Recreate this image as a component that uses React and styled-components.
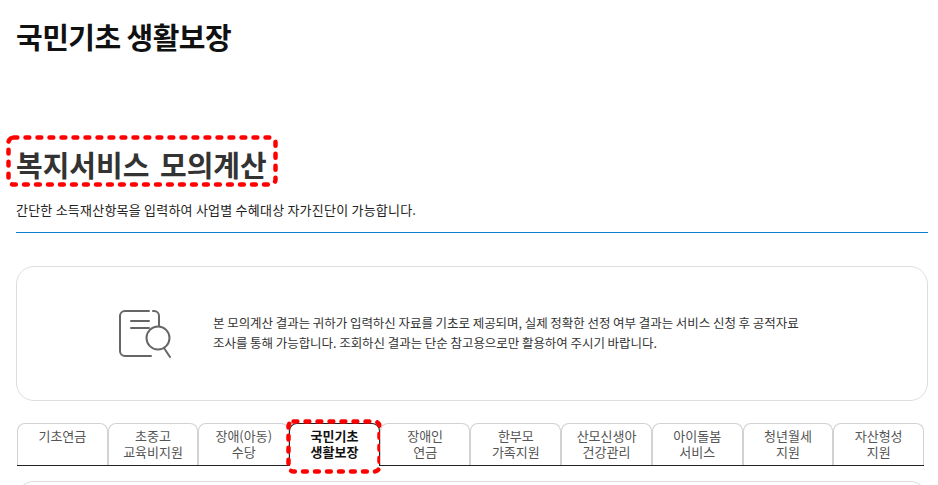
import React from "react";
import styled, { createGlobalStyle } from "styled-components";

const Global = createGlobalStyle`
  html, body { margin: 0; padding: 0; background: #fff; overflow: hidden; }
  body { font-family: "Noto Sans CJK KR", "Noto Sans", sans-serif; }
`;
const Page = styled.div`
  width: 938px; height: 485px; overflow: hidden; box-sizing: border-box; padding: 0 10px 0 16px;
`;
const PageTitle = styled.h1`
  margin: 0; padding-top: 15px; height: 121px; box-sizing: border-box;
  font-size: 29px; line-height: 42px; font-weight: 700; color: #111; letter-spacing: -0.55px;
`;
const SectionHead = styled.div`
  height: 111px; border-bottom: 1px solid #0a7fd0;
`;
const SectionTitle = styled.h2`
  position: relative; width: fit-content; margin: 0; padding-top: 23px;
  font-size: 29px; line-height: 40px; font-weight: 700; color: #333; word-spacing: 4px;
`;
const SectionDesc = styled.p`
  margin: 17px 0 0; font-size: 13px; line-height: 18px; color: #222; letter-spacing: 0.22px;
`;
const Notice = styled.div`
  margin-top: 33px; height: 135px; box-sizing: border-box; border: 1px solid #ddd; border-radius: 18px;
  display: flex; align-items: center; padding-left: 101px; gap: 41px;
`;
const NoticeText = styled.p`
  margin: -2px 0 0; width: 610px; font-size: 12.5px; line-height: 20px; color: #333; letter-spacing: -0.05px;
`;
const Tabs = styled.div`
  margin: 22px 4px 0 1px; display: grid; grid-template-columns: repeat(10, 1fr); height: 42px; border-bottom: 1px solid #222;
`;
const Tab = styled.div`
  position: relative; box-sizing: border-box; height: ${p => (p.$active ? "43px" : "42px")};
  border: 1px solid ${p => (p.$active ? "#222" : "#d2d2d2")}; border-bottom: none; border-radius: 8px 8px 0 0;
  background: #fff; padding-top: 4px; text-align: center; font-size: 13px; line-height: 16px;
  color: ${p => (p.$active ? "#111" : "#555")}; font-weight: ${p => (p.$active ? 700 : 400)};
`;
const Panel = styled.div`
  margin-top: 15px; height: 40px; border: 1px solid #ddd; border-radius: 18px;
`;
const Frame = styled.svg`
  position: absolute; left: ${p => p.$left}px; top: ${p => p.$top}px; pointer-events: none; overflow: visible;
`;
const DashFrame = ({ left, top, width, height }) => (
  <Frame $left={left} $top={top} width={width} height={height} viewBox={`0 0 ${width} ${height}`} fill="none">
    <rect x="2.5" y="2.5" width={width - 5} height={height - 5} rx="5" stroke="#f00" strokeWidth="4.5" strokeLinecap="round" strokeDasharray="3.8 8.2" />
  </Frame>
);
const tabs = [["기초연금"],["초중고","교육비지원"],["장애(아동)","수당"],["국민기초","생활보장"],["장애인","연금"],["한부모","가족지원"],["산모신생아","건강관리"],["아이돌봄","서비스"],["청년월세","지원"],["자산형성","지원"]];
const Icon = () => (
  <svg width="54" height="50" viewBox="0 0 54 50" fill="none" stroke="#666" strokeWidth="2" strokeLinecap="round" strokeLinejoin="round">
    <path d="M31 2H7a5 5 0 0 0-5 5v35a5 5 0 0 0 5 5h26" />
    <path d="M35 2h1a5 5 0 0 1 5 5v10" />
    <path d="M13 12h18M13 19h18" />
    <circle cx="40" cy="29" r="11.5" />
    <path d="M46 39l6 9" />
  </svg>
);
export default function App() {
  return (
    <Page>
      <Global />
      <PageTitle>국민기초 생활보장</PageTitle>
      <SectionHead>
        <SectionTitle>
          복지서비스 모의계산
          <DashFrame left={-10} top={14} width={272} height={52} />
        </SectionTitle>
        <SectionDesc>간단한 소득재산항목을 입력하여 사업별 수혜대상 자가진단이 가능합니다.</SectionDesc>
      </SectionHead>
      <Notice>
        <Icon />
        <NoticeText>본 모의계산 결과는 귀하가 입력하신 자료를 기초로 제공되며, 실제 정확한 선정 여부 결과는 서비스 신청 후 공적자료<br />조사를 통해 가능합니다. 조회하신 결과는 단순 참고용으로만 활용하여 주시기 바랍니다.</NoticeText>
      </Notice>
      <Tabs>
        {tabs.map((t) => {
          const active = t[0] === "국민기초";
          return (
            <Tab key={t[0]} $active={active}>
              {t[0]}{t[1] && <br />}{t[1]}
              {active && <DashFrame left={-4} top={-5} width={96} height={55} />}
            </Tab>
          );
        })}
      </Tabs>
      <Panel />
    </Page>
  );
}
